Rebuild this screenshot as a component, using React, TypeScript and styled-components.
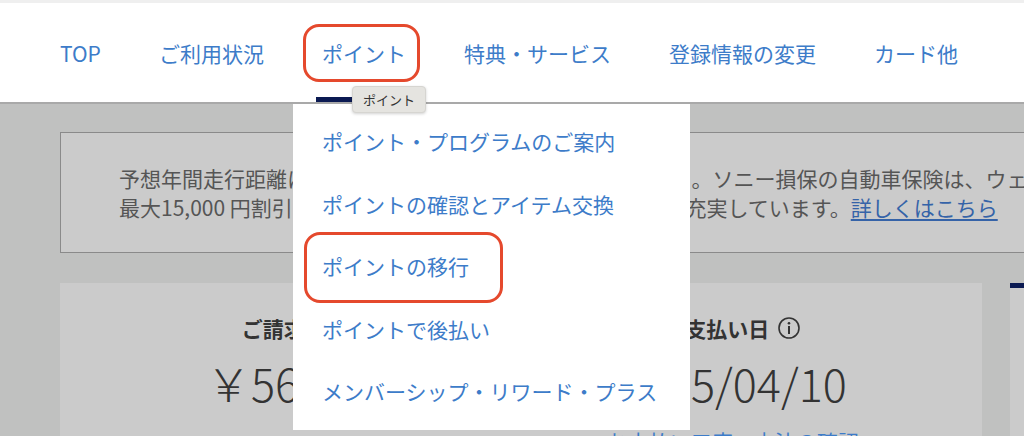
import React from "react";
import styled, { createGlobalStyle } from "styled-components";

const GlobalStyle = createGlobalStyle`
  html, body {
    margin: 0;
    padding: 0;
    background: #c0c1c0;
    overflow: hidden;
  }
  body {
    font-family: "Noto Sans CJK JP", "Noto Sans", sans-serif;
  }
  *, *::before, *::after { box-sizing: border-box; }
`;

const Page = styled.div`
  position: relative;
  width: 1024px;
  height: 436px;
  overflow: hidden;
  background: #c0c1c0;
`;

const Header = styled.header`
  height: 104px;
  background: #ffffff;
  border-top: 3px solid #efefef;
  border-bottom: 2px solid #a9a9a9;
  display: flex;
  align-items: center;
`;

const Nav = styled.nav`
  display: flex;
  align-items: center;
  gap: 58px;
  padding-left: 60px;
`;

const NavLink = styled.a<{ $active?: boolean }>`
  position: relative;
  font-size: 21px;
  line-height: 30px;
  color: #3d7cc9;
  text-decoration: none;
  white-space: nowrap;
  ${(p) =>
    p.$active &&
    `
    &::before {
      content: "";
      position: absolute;
      left: -19px;
      right: -14px;
      top: -14px;
      bottom: -14px;
      border: 3px solid #e5492d;
      border-radius: 16px;
    }
    &::after {
      content: "";
      position: absolute;
      left: -6px;
      right: -8px;
      top: 59px;
      height: 5px;
      background: #0b1a52;
    }
  `}
`;

const Main = styled.main`
  padding: 28px 0 0 60px;
  display: flex;
  flex-direction: column;
  gap: 30px;
`;

const Notice = styled.div`
  width: 1000px;
  height: 121px;
  flex-shrink: 0;
  background: #cbcbcb;
  border: 1px solid #8a8a8a;
  padding: 31px 0 0 58px;
  font-size: 21px;
  line-height: 29px;
  color: #555555;
  white-space: nowrap;
  overflow: hidden;
`;

const NoticeLink = styled.a`
  color: #3563a8;
  text-decoration: underline;
  text-underline-offset: 3px;
`;

const CardRow = styled.div`
  display: flex;
  gap: 28px;
`;

const SummaryCard = styled.section`
  width: 922px;
  height: 160px;
  flex-shrink: 0;
  background: #cbcbcb;
  display: grid;
  grid-template-columns: 1fr 1fr;
  padding: 0 30px 0 15px;
`;

const SideCard = styled.section`
  width: 200px;
  height: 160px;
  flex-shrink: 0;
  background: #cbcbcb;
  border-top: 5px solid #0b1a52;
`;

const Column = styled.div`
  display: flex;
  flex-direction: column;
  align-items: center;
  padding-top: 30px;
`;

const Label = styled.div`
  display: flex;
  align-items: center;
  gap: 8px;
  font-size: 21px;
  line-height: 30px;
  font-weight: 700;
  color: #333333;
  white-space: nowrap;
`;

const Amount = styled.div`
  margin-top: 12px;
  font-size: 45px;
  line-height: 56px;
  font-weight: 300;
  color: #333333;
  white-space: nowrap;
`;

const SubLink = styled.a`
  margin-top: 15px;
  font-size: 21px;
  line-height: 30px;
  color: #3d7cc9;
  text-decoration: none;
  white-space: nowrap;
`;

const Dropdown = styled.ul`
  position: absolute;
  left: 293px;
  top: 104px;
  width: 397px;
  height: 326px;
  margin: 0;
  padding: 6px 0 0;
  list-style: none;
  background: #ffffff;
`;

const DropItem = styled.li<{ $marked?: boolean }>`
  position: relative;
  height: 62.5px;
  display: flex;
  align-items: center;
  padding-left: 29px;
  font-size: 21px;
  color: #3d7cc9;
  white-space: nowrap;
  ${(p) =>
    p.$marked &&
    `
    &::before {
      content: "";
      position: absolute;
      left: 11px;
      width: 199px;
      top: -3px;
      bottom: -5px;
      border: 3px solid #e5492d;
      border-radius: 16px;
    }
  `}
`;

const Tooltip = styled.div`
  position: absolute;
  left: 352px;
  top: 86px;
  height: 27px;
  padding: 0 10px;
  display: flex;
  align-items: center;
  background: #e5e4e0;
  border: 1px solid #d6d5d1;
  border-radius: 4px;
  box-shadow: 0 1px 3px rgba(0, 0, 0, 0.18);
  font-size: 13px;
  color: #333333;
  white-space: nowrap;
`;

const InfoIcon = () => (
  <svg width="24" height="24" viewBox="0 0 24 24" aria-hidden="true">
    <circle cx="12" cy="12" r="10" fill="none" stroke="#333" strokeWidth="1.6" />
    <circle cx="12" cy="7.2" r="1.3" fill="#333" />
    <rect x="11" y="10" width="2" height="8" fill="#333" />
  </svg>
);

const navItems = ["TOP", "ご利用状況", "ポイント", "特典・サービス", "登録情報の変更", "カード他"];
const menuItems = [
  "ポイント・プログラムのご案内",
  "ポイントの確認とアイテム交換",
  "ポイントの移行",
  "ポイントで後払い",
  "メンバーシップ・リワード・プラス",
];

export default function App() {
  return (
    <Page>
      <GlobalStyle />
      <Header>
        <Nav>
          {navItems.map((n) => (
            <NavLink key={n} $active={n === "ポイント"}>
              {n}
            </NavLink>
          ))}
        </Nav>
      </Header>
      <Main>
        <Notice>
          予想年間走行距離に応じて,走った分だけの保険料をお見積り。ソニー損保の自動車保険は、ウェブ割引で
          <br />
          最大15,000 円割引のほか、事故対応や24hロードサービスも充実しています。
          <NoticeLink>詳しくはこちら</NoticeLink>
        </Notice>
        <CardRow>
          <SummaryCard>
            <Column>
              <Label>ご請求金額</Label>
              <Amount>￥56,780</Amount>
            </Column>
            <Column>
              <Label>
                お支払い日
                <InfoIcon />
              </Label>
              <Amount>2025/04/10</Amount>
              <SubLink>お支払い口座・方法の確認</SubLink>
            </Column>
          </SummaryCard>
          <SideCard />
        </CardRow>
      </Main>
      <Dropdown>
        {menuItems.map((m) => (
          <DropItem key={m} $marked={m === "ポイントの移行"}>
            {m}
          </DropItem>
        ))}
      </Dropdown>
      <Tooltip>ポイント</Tooltip>
    </Page>
  );
}
